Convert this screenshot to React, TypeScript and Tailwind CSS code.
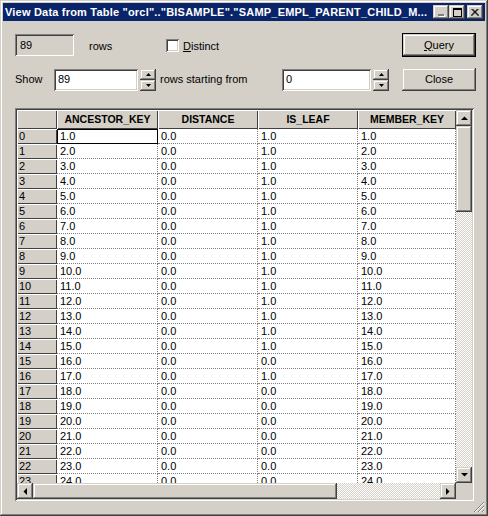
import React from "react";

const COLS = [
  { key: "ANCESTOR_KEY", w: "w-[101px]" },
  { key: "DISTANCE", w: "w-[100px]" },
  { key: "IS_LEAF", w: "w-[100px]" },
  { key: "MEMBER_KEY", w: "w-[98px]" },
];

const LEAF = [1, 1, 1, 1, 1, 1, 1, 1, 1, 1, 1, 1, 1, 1, 1, 0, 1, 0, 0, 0, 0, 0, 0, 0];

const rows = LEAF.map((leaf, i) => [`${i + 1}.0`, "0.0", `${leaf}.0`, `${i + 1}.0`]);

const raised =
  "shadow-[inset_-1px_-1px_#404040,inset_1px_1px_#d4d0c8,inset_-2px_-2px_#808080,inset_2px_2px_#ffffff]";
const sunken =
  "shadow-[inset_1px_1px_#808080,inset_-1px_-1px_#ffffff,inset_2px_2px_#404040,inset_-2px_-2px_#d4d0c8]";
const checker =
  "bg-[image:repeating-conic-gradient(#d4d0c8_0_25%,#ffffff_0_50%)] bg-[length:2px_2px]";

function Arrow({ dir }: { dir: "up" | "down" | "left" | "right" }) {
  const pts = {
    up: "0,4 7,4 3.5,0.5",
    down: "0,0 7,0 3.5,3.5",
    left: "4,0 4,7 0.5,3.5",
    right: "0,0 0,7 3.5,3.5",
  }[dir];
  const vert = dir === "up" || dir === "down";
  return (
    <svg width={vert ? 7 : 4} height={vert ? 4 : 7} viewBox={vert ? "0 0 7 4" : "0 0 4 7"}>
      <polygon points={pts} fill="#000" />
    </svg>
  );
}

function ScrollBtn({ dir }: { dir: "up" | "down" | "left" | "right" }) {
  return (
    <div className={`flex h-[16px] w-[16px] shrink-0 items-center justify-center bg-[#d4d0c8] ${raised}`}>
      <Arrow dir={dir} />
    </div>
  );
}

function Spin() {
  return (
    <div className="ml-[2px] flex w-[16px] flex-col">
      <div className={`flex h-[11px] items-center justify-center ${raised}`}>
        <svg width="5" height="3" viewBox="0 0 5 3">
          <polygon points="0,3 5,3 2.5,0" fill="#000" />
        </svg>
      </div>
      <div className={`flex h-[11px] items-center justify-center ${raised}`}>
        <svg width="5" height="3" viewBox="0 0 5 3">
          <polygon points="0,0 5,0 2.5,3" fill="#000" />
        </svg>
      </div>
    </div>
  );
}

function TitleBar() {
  return (
    <div className="flex h-[18px] items-center bg-[#0a246a] pl-[2px] pr-[2px]">
      <div className="flex-1 overflow-hidden whitespace-nowrap text-[11px] font-bold tracking-[0.2px] text-white">
        View Data from Table "orcl".."BISAMPLE"."SAMP_EMPL_PARENT_CHILD_M...
      </div>
      <div className="flex items-center">
        <div className={`flex h-[14px] w-[16px] items-end justify-center bg-[#d4d0c8] pb-[3px] ${raised}`}>
          <div className="h-[2px] w-[6px] bg-[#808080] shadow-[1px_1px_#ffffff]" />
        </div>
        <div className={`flex h-[14px] w-[16px] items-center justify-center bg-[#d4d0c8] ${raised}`}>
          <div className="h-[9px] w-[9px] border border-t-2 border-black" />
        </div>
        <div className={`ml-[2px] flex h-[14px] w-[16px] items-center justify-center bg-[#d4d0c8] ${raised}`}>
          <svg width="8" height="7" viewBox="0 0 8 7">
            <path d="M0.5 0 L7.5 7 M1.5 0 L8 6.5 M7.5 0 L0.5 7 M6.5 0 L0 6.5" stroke="#000" strokeWidth="1" />
          </svg>
        </div>
      </div>
    </div>
  );
}

export default function App() {
  return (
    <div
      className={`relative flex h-[516px] w-[488px] flex-col overflow-hidden bg-[#d4d0c8] p-[3px] font-['Liberation_Sans',Arial,sans-serif] text-[11px] text-black ${raised}`}
    >
      <TitleBar />

      <div className="flex flex-col pl-[12px] pt-[12px]">
        {/* first row */}
        <div className="flex h-[24px] items-start pr-[9px]">
          <div className={`mt-[1px] flex h-[22px] w-[59px] items-center pl-[5px] ${sunken}`}>89</div>
          <div className="ml-[15px] mt-[5px] w-[77px]">rows</div>
          <div className={`mt-[6px] h-[13px] w-[13px] bg-white ${sunken}`} />
          <div className="ml-[4px] mt-[5px]">
            <span className="underline">D</span>istinct
          </div>
          <div className="ml-auto flex h-[24px] w-[74px] items-center justify-center border border-black">
            <div className={`flex h-full w-full items-center justify-center ${raised}`}>
              <span className="underline">Q</span>uery
            </div>
          </div>
        </div>

        {/* second row */}
        <div className="mt-[11px] flex h-[23px] items-center pr-[9px]">
          <div className="w-[39px]">Show</div>
          <div className={`flex h-[22px] w-[84px] items-center bg-white pl-[4px] ${sunken}`}>89</div>
          <Spin />
          <div className="ml-[4px] w-[122px]">rows starting from</div>
          <div className={`flex h-[22px] w-[89px] items-center bg-white pl-[4px] ${sunken}`}>0</div>
          <Spin />
          <div className={`ml-auto flex h-[23px] w-[74px] items-center justify-center ${raised}`}>Close</div>
        </div>

        {/* table */}
        <div className={`mt-[17px] h-[393px] w-[459px] p-[2px] ${sunken}`}>
          <div className="flex h-[389px] w-[455px] flex-col">
            <div className="flex h-[373px]">
              <div className="w-[439px] overflow-hidden bg-white">
                <div className="flex h-[19px] bg-[#d4d0c8]">
                  <div className="h-full w-[40px] shadow-[inset_1px_1px_#ffffff,inset_-1px_-1px_#404040]" />
                  {COLS.map((c) => (
                    <div
                      key={c.key}
                      className={`flex h-full ${c.w} items-center justify-center pt-[1px] text-[10.5px] font-bold shadow-[inset_1px_1px_#ffffff,inset_-1px_-1px_#404040]`}
                    >
                      {c.key}
                    </div>
                  ))}
                </div>
                {rows.map((r, i) => (
                  <div key={i} className="flex h-[15px]">
                    <div className="flex h-full w-[40px] items-center bg-[#d4d0c8] pl-[2px] shadow-[inset_1px_1px_#ffffff,inset_-1px_-1px_#404040]">
                      {i}
                    </div>
                    {r.map((v, j) => (
                      <div
                        key={j}
                        className={`flex h-full ${COLS[j].w} items-center border-r border-b border-dotted border-[#808080] pl-[3px] ${
                          i === 0 && j === 0 ? "outline-1 -outline-offset-1 outline-black" : ""
                        }`}
                      >
                        {v}
                      </div>
                    ))}
                  </div>
                ))}
              </div>
              <div className="flex w-[16px] flex-col">
                <ScrollBtn dir="up" />
                <div className={`h-[86px] bg-[#d4d0c8] ${raised}`} />
                <div className={`flex-1 ${checker}`} />
                <ScrollBtn dir="down" />
              </div>
            </div>
            <div className="flex h-[16px]">
              <ScrollBtn dir="left" />
              <div className={`w-[304px] bg-[#d4d0c8] ${raised}`} />
              <div className={`flex-1 ${checker}`} />
              <ScrollBtn dir="right" />
              <div className="w-[16px] bg-[#d4d0c8]" />
            </div>
          </div>
        </div>
      </div>

      <svg className="absolute bottom-[3px] right-[3px]" width="12" height="12" viewBox="0 0 12 12">
        <path d="M11 1 L1 11 M11 5 L5 11 M11 9 L9 11" stroke="#808080" strokeWidth="1" />
        <path d="M11 2 L2 11 M11 6 L6 11 M11 10 L10 11" stroke="#ffffff" strokeWidth="1" />
      </svg>
    </div>
  );
}
